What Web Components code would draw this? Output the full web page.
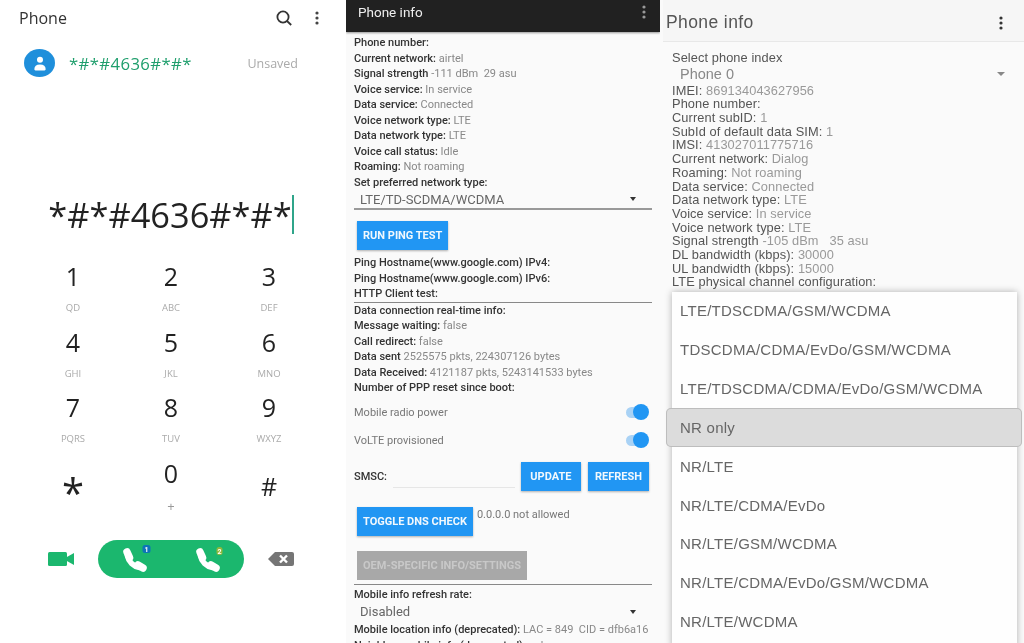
<!DOCTYPE html>
<html>
<head>
<meta charset="utf-8">
<title>Phone info</title>
<style>
    html, body { margin: 0; padding: 0; background: #fff; }
    #page { display: flex; width: 1024px; height: 643px; overflow: hidden; filter: blur(.3px); }
</style>
</head>
<body>
<div id="page">
    <dialer-panel>
        <dial-key digit="1" letters="QD"></dial-key>
        <dial-key digit="2" letters="ABC"></dial-key>
        <dial-key digit="3" letters="DEF"></dial-key>
        <dial-key digit="4" letters="GHI"></dial-key>
        <dial-key digit="5" letters="JKL"></dial-key>
        <dial-key digit="6" letters="MNO"></dial-key>
        <dial-key digit="7" letters="PQRS"></dial-key>
        <dial-key digit="8" letters="TUV"></dial-key>
        <dial-key digit="9" letters="WXYZ"></dial-key>
        <dial-key digit="*" low star></dial-key>
        <dial-key digit="0" letters="+" plus></dial-key>
        <dial-key digit="#" low></dial-key>
    </dialer-panel>

    <info-dark>
        <info-row>Phone number:</info-row>
        <info-row>Current network: <span slot="value">airtel</span></info-row>
        <info-row>Signal strength <span slot="value">-111 dBm&nbsp;&nbsp;29 asu</span></info-row>
        <info-row>Voice service: <span slot="value">In service</span></info-row>
        <info-row>Data service: <span slot="value">Connected</span></info-row>
        <info-row>Voice network type: <span slot="value">LTE</span></info-row>
        <info-row>Data network type: <span slot="value">LTE</span></info-row>
        <info-row>Voice call status: <span slot="value">Idle</span></info-row>
        <info-row>Roaming: <span slot="value">Not roaming</span></info-row>
        <info-row>Set preferred network type:</info-row>
        <spinner-select underline>LTE/TD-SCDMA/WCDMA</spinner-select>
        <app-button style="margin:11px 0 5px 3px">RUN PING TEST</app-button>
        <info-row>Ping Hostname(www.google.com) IPv4:</info-row>
        <info-row>Ping Hostname(www.google.com) IPv6:</info-row>
        <info-row>HTTP Client test:</info-row>
        <div style="height:1px;background:#888;margin:0"></div>
        <info-row>Data connection real-time info:</info-row>
        <info-row>Message waiting: <span slot="value">false</span></info-row>
        <info-row>Call redirect: <span slot="value">false</span></info-row>
        <info-row>Data sent <span slot="value">2525575 pkts, 224307126 bytes</span></info-row>
        <info-row>Data Received: <span slot="value">4121187 pkts, 5243141533 bytes</span></info-row>
        <info-row>Number of PPP reset since boot:</info-row>
        <switch-row style="margin-top:3px">Mobile radio power</switch-row>
        <switch-row>VoLTE provisioned</switch-row>
        <div style="display:flex;align-items:center;margin-top:7px;height:30px">
            <info-row>SMSC:</info-row>
            <div style="flex:1;align-self:flex-end;height:1px;background:#e6e6e6;margin:0 6px 4px 6px"></div>
            <app-button style="padding:0 9.5px">UPDATE</app-button>
            <app-button style="padding:0 7px;margin-left:7px;margin-right:3px">REFRESH</app-button>
        </div>
        <div style="display:flex;align-items:flex-start;margin:15px 0 0 3px">
            <app-button>TOGGLE DNS CHECK</app-button>
            <info-row style="margin:0 0 0 4px"><span slot="value" style="color:#777">0.0.0.0 not allowed</span></info-row>
        </div>
        <app-button disabled style="margin:15px 0 4px 3px">OEM-SPECIFIC INFO/SETTINGS</app-button>
        <div style="height:1px;background:#888;margin:0 0 2px"></div>
        <info-row>Mobile info refresh rate:</info-row>
        <spinner-select>Disabled</spinner-select>
        <info-row style="margin-top:1px">Mobile location info (deprecated): <span slot="value">LAC = 849&nbsp;&nbsp;CID = dfb6a16</span></info-row>
        <info-row>Neighbor mobile info (deprecated): <span slot="value">unknown</span></info-row>
    </info-dark>

    <info-light>
        <light-row>Select phone index</light-row>
        <spinner-select light>Phone 0</spinner-select>
        <light-row>IMEI: <span slot="value">869134043627956</span></light-row>
        <light-row>Phone number:</light-row>
        <light-row>Current subID: <span slot="value">1</span></light-row>
        <light-row>SubId of default data SIM: <span slot="value">1</span></light-row>
        <light-row>IMSI: <span slot="value">413027011775716</span></light-row>
        <light-row>Current network: <span slot="value">Dialog</span></light-row>
        <light-row>Roaming: <span slot="value">Not roaming</span></light-row>
        <light-row>Data service: <span slot="value">Connected</span></light-row>
        <light-row>Data network type: <span slot="value">LTE</span></light-row>
        <light-row>Voice service: <span slot="value">In service</span></light-row>
        <light-row>Voice network type: <span slot="value">LTE</span></light-row>
        <light-row>Signal strength <span slot="value">-105 dBm&nbsp;&nbsp;&nbsp;35 asu</span></light-row>
        <light-row>DL bandwidth (kbps): <span slot="value">30000</span></light-row>
        <light-row>UL bandwidth (kbps): <span slot="value">15000</span></light-row>
        <light-row>LTE physical channel configuration:</light-row>
        <network-menu slot="menu">
            <menu-option>LTE/TDSCDMA/GSM/WCDMA</menu-option>
            <menu-option>TDSCDMA/CDMA/EvDo/GSM/WCDMA</menu-option>
            <menu-option>LTE/TDSCDMA/CDMA/EvDo/GSM/WCDMA</menu-option>
            <menu-option selected>NR only</menu-option>
            <menu-option>NR/LTE</menu-option>
            <menu-option>NR/LTE/CDMA/EvDo</menu-option>
            <menu-option>NR/LTE/GSM/WCDMA</menu-option>
            <menu-option>NR/LTE/CDMA/EvDo/GSM/WCDMA</menu-option>
            <menu-option>NR/LTE/WCDMA</menu-option>
        </network-menu>
    </info-light>
</div>

<script>
const kebab = (color) => `<svg width="4" height="14" viewBox="0 0 4 14"><circle cx="2" cy="2" r="1.6" fill="${color}"/><circle cx="2" cy="7" r="1.6" fill="${color}"/><circle cx="2" cy="12" r="1.6" fill="${color}"/></svg>`;
// fat handset, 25x24 box
const handset = `<g fill="none" stroke="#fff" stroke-linecap="round"><path d="M4.5 4l2.5 5.5M15.5 17l5 3" stroke-width="7.5"/><path d="M5 8C6 13.5 11 18.5 17 19.5" stroke-width="5.5"/></g>`;
const callIcon = (n, x, y, w, color) => `<svg width="34" height="30" viewBox="0 0 34 30"><g transform="translate(4.5 4)">${handset}</g><rect x="${x}" y="${y}" width="${w}" height="8" rx="2.5" fill="${color}"/><text x="${x + w / 2}" y="${y + 6.5}" text-anchor="middle" font-family="Roboto, sans-serif" font-size="7" font-weight="700" fill="#fff">${n}</text></svg>`;

class DialKey extends HTMLElement {
    constructor() {
        super();
        this.attachShadow({ mode: "open" }).innerHTML = `
        <style>
            :host { display: flex; flex-direction: column; align-items: center; height: 65.5px; font-family: "Open Sans", sans-serif; }
            #d { font-size: 25px; line-height: 30px; height: 30px; color: #222; margin-top: 4px; }
            #l { font-size: 9.5px; line-height: 12px; color: #aaa; margin-top: 11px; }
            :host([low]) #d { margin-top: 17px; }
            :host([star]) #d { font-size: 40px; margin-top: 24px; }
            :host([plus]) #l { font-size: 13px; margin-top: 12px; color: #999; }
        </style>
        <div id="d"></div><div id="l"></div>`;
    }
    connectedCallback() {
        this.shadowRoot.querySelector("#d").textContent = this.getAttribute("digit");
        this.shadowRoot.querySelector("#l").textContent = this.getAttribute("letters") || "";
    }
} customElements.define("dial-key", DialKey);

class DialerPanel extends HTMLElement {
    constructor() {
        super();
        this.attachShadow({ mode: "open" }).innerHTML = `
        <style>
            :host { display: block; width: 346px; flex: none; background: #fff; font-family: "Open Sans", sans-serif; }
            header { display: flex; align-items: center; height: 36px; padding: 0 27px 0 19px; gap: 22px; }
            header b { flex: 1; font-weight: 400; font-size: 16px; color: #333; }
            #match { display: flex; align-items: center; height: 28px; margin-top: 13px; padding-left: 24px; }
            #avatar { width: 31px; height: 28px; border-radius: 50%; background: #1f8fdb; display: flex; align-items: center; justify-content: center; flex: none; }
            #num { flex: 1; margin-left: 14px; color: #1e9e6c; font-size: 16.7px; letter-spacing: .4px; }
            #unsaved { color: #aaa; font-size: 12.5px; margin-right: 48px; }
            #typed { display: flex; justify-content: center; align-items: center; height: 40px; margin: 117px 4px 0 0; font-size: 34.4px; color: #222; }
            #caret { width: 2px; height: 39px; background: #2fa58a; }
            #pad { display: grid; grid-template-columns: repeat(3, 98px); justify-content: center; margin: 23px 4px 0 0; }
            #actions { display: flex; align-items: center; justify-content: center; margin: 21px 4px 0 0; }
            #call { width: 146px; height: 38px; border-radius: 19px; background: #1bb76e; margin: 0 24px; display: flex; justify-content: space-around; align-items: center; }
        </style>
        <header>
            <b>Phone</b>
            <svg width="18" height="18" viewBox="0 0 18 18" fill="none" stroke="#333" stroke-width="1.8"><circle cx="8" cy="8" r="5.6"/><path d="M12 12l4.2 4"/></svg>
            ${kebab("#444")}
        </header>
        <div id="match">
            <div id="avatar"><svg width="16" height="17" viewBox="0 0 16 18" fill="#fff"><circle cx="8" cy="5" r="3.2"/><path d="M2 15c0-3 2-5 6-5s6 2 6 5c0 1-1 1.5-2 1.5H4c-1 0-2-.5-2-1.5z"/></svg></div>
            <div id="num">*#*#4636#*#*</div>
            <div id="unsaved">Unsaved</div>
        </div>
        <div id="typed"><span>*#*#4636#*#*</span><div id="caret"></div></div>
        <div id="pad"><slot></slot></div>
        <div id="actions">
            <svg width="26" height="14" viewBox="0 0 26 14" fill="#1bb76e"><rect x="0" y="0" width="19" height="14" rx="1.5"/><path d="M18 5.5l8-4.5v12l-8-4.5z"/></svg>
            <div id="call">
                ${callIcon(1, 24.5, 1, 8, "#0d74b8")}
                ${callIcon(2, 25.5, 3, 6, "#8fb83c")}
            </div>
            <svg width="26" height="14" viewBox="0 0 26 14"><path fill="#757575" d="M7 0h17a2 2 0 0 1 2 2v10a2 2 0 0 1-2 2H7L0 7z"/><path d="M12 3.5l7 7M19 3.5l-7 7" stroke="#fff" stroke-width="2.4"/></svg>
        </div>`;
    }
} customElements.define("dialer-panel", DialerPanel);

class InfoRow extends HTMLElement {
    constructor() {
        super();
        this.attachShadow({ mode: "open" }).innerHTML = `
        <style>
            :host { display: block; height: 15.5px; line-height: 15.5px; white-space: nowrap; font-family: Roboto, sans-serif; font-size: 11px; font-weight: 500; color: #333; }
            ::slotted([slot=value]) { font-weight: 400; color: #888; }
        </style>
        <slot></slot><slot name="value"></slot>`;
    }
} customElements.define("info-row", InfoRow);

class LightRow extends HTMLElement {
    constructor() {
        super();
        this.attachShadow({ mode: "open" }).innerHTML = `
        <style>
            :host { display: block; height: 13.7px; line-height: 13.7px; white-space: nowrap; font-family: "Liberation Sans", sans-serif; font-size: 12.8px; letter-spacing: .09px; color: #555; }
            ::slotted([slot=value]) { color: #999; }
        </style>
        <slot></slot><slot name="value"></slot>`;
    }
} customElements.define("light-row", LightRow);

class SpinnerSelect extends HTMLElement {
    constructor() {
        super();
        this.attachShadow({ mode: "open" }).innerHTML = `
        <style>
            :host { display: flex; align-items: center; justify-content: space-between; height: 19px; padding: 0 16px 0 6px; font-family: Roboto, sans-serif; font-size: 13px; color: #666; }
            :host([underline]) { border-bottom: 2px solid #999; height: 20px; box-sizing: border-box; }
            :host([light]) { font-family: "Liberation Sans", sans-serif; height: 19px; padding: 0 7px 0 8px; font-size: 14.5px; color: #888; }
            i { width: 0; height: 0; border: 3.5px solid transparent; border-top: 4px solid #333; border-bottom: 0; }
            :host([light]) i { border-top-color: #888; border-width: 4px 4.5px 0; }
        </style>
        <slot></slot><i></i>`;
    }
} customElements.define("spinner-select", SpinnerSelect);

class AppButton extends HTMLElement {
    constructor() {
        super();
        this.attachShadow({ mode: "open" }).innerHTML = `
        <style>
            :host { display: inline-flex; width: fit-content; height: 29px; align-items: center; padding: 0 6px; background: #2196f3; color: #f2f8fd; font-family: Roboto, sans-serif; font-size: 11px; font-weight: 700; box-shadow: 0 1px 2px rgba(0,0,0,.3); flex: none; }
            :host([disabled]) { background: #a8a8a8; color: #c8c8c8; box-shadow: none; }
        </style>
        <slot></slot>`;
    }
} customElements.define("app-button", AppButton);

class SwitchRow extends HTMLElement {
    constructor() {
        super();
        this.attachShadow({ mode: "open" }).innerHTML = `
        <style>
            :host { display: flex; align-items: center; justify-content: space-between; height: 28px; font-family: Roboto, sans-serif; font-size: 11px; color: #777; padding-right: 4px; }
            #track { position: relative; width: 22px; height: 11px; border-radius: 6px; background: #a9d2f5; }
            #knob { position: absolute; right: -1px; top: -3px; width: 16px; height: 16px; border-radius: 50%; background: #2196f3; }
        </style>
        <slot></slot><div id="track"><div id="knob"></div></div>`;
    }
} customElements.define("switch-row", SwitchRow);

class InfoDark extends HTMLElement {
    constructor() {
        super();
        this.attachShadow({ mode: "open" }).innerHTML = `
        <style>
            :host { display: block; width: 314px; flex: none; background: #fafafa; overflow: hidden; }
            header { display: flex; align-items: center; justify-content: space-between; height: 32px; background: #212121; color: #eee; padding: 0 14px 8px 12px; box-sizing: border-box; font-family: Roboto, sans-serif; font-size: 13.5px; box-shadow: 0 1px 2px rgba(0,0,0,.4); }
            #body { padding: 3px 8px 0; }
        </style>
        <header><span>Phone info</span>${kebab("#999")}</header>
        <div id="body"><slot></slot></div>`;
    }
} customElements.define("info-dark", InfoDark);

class InfoLight extends HTMLElement {
    constructor() {
        super();
        this.attachShadow({ mode: "open" }).innerHTML = `
        <style>
            :host { display: block; position: relative; flex: 1; background: #fafafa; overflow: hidden; }
            header { display: flex; align-items: center; justify-content: space-between; height: 42px; margin-left: 3px; background: #f6f6f6; border-bottom: 1px solid #e8e8e8; box-sizing: border-box; padding: 4px 21px 0 3px; color: #555; font-family: "Liberation Sans", sans-serif; font-size: 17.5px; letter-spacing: .4px; }
            #body { padding: 9px 12px 0; }
        </style>
        <header><span>Phone info</span>${kebab("#333")}</header>
        <div id="body"><slot></slot></div>
        <slot name="menu"></slot>`;
    }
} customElements.define("info-light", InfoLight);

class NetworkMenu extends HTMLElement {
    constructor() {
        super();
        this.attachShadow({ mode: "open" }).innerHTML = `
        <style>
            :host { position: absolute; left: 12px; right: 7px; top: 291.5px; bottom: -5px; background: #fefefe; box-shadow: 0 0 7px rgba(0,0,0,.3); }
        </style>
        <slot></slot>`;
    }
} customElements.define("network-menu", NetworkMenu);

class MenuOption extends HTMLElement {
    constructor() {
        super();
        this.attachShadow({ mode: "open" }).innerHTML = `
        <style>
            :host { display: flex; align-items: center; position: relative; height: 38.85px; padding-left: 8px; font-family: "Liberation Sans", sans-serif; font-size: 15px; letter-spacing: .25px; color: #666; white-space: nowrap; }
            :host([selected]) { margin: 0 -5px 0 -6px; padding-left: 14px; background: #dcdcdc; border-radius: 5px; box-shadow: inset 0 0 0 1px #bdbdbd; }
        </style>
        <slot></slot>`;
    }
} customElements.define("menu-option", MenuOption);
</script>
</body>
</html>
